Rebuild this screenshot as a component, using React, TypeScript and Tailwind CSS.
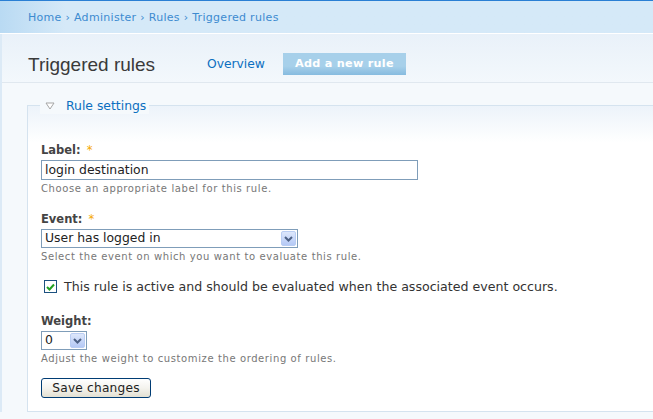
import React from 'react';

const font = "font-['DejaVu_Sans',Verdana,sans-serif]";

const Chevron: React.FC = () => (
  <svg width="9" height="6" viewBox="0 0 9 6">
    <path d="M1 1 L4.5 4.5 L8 1" stroke="#4d6185" strokeWidth="2" fill="none" />
  </svg>
);

const Select: React.FC<{ value: string; width: string }> = ({ value, width }) => (
  <div className={`${width} h-[19px] flex items-center justify-between border border-[#7f9db9] bg-white pl-[3px] pr-[1px]`}>
    <span className="text-[12.4px] leading-none text-[#222]">{value}</span>
    <span className="w-[15px] h-[15px] flex items-center justify-center rounded-[2px] border border-[#b9cdf3] bg-gradient-to-b from-[#dde7fb] to-[#b5c9f5]">
      <Chevron />
    </span>
  </div>
);

const Required: React.FC = () => <span className="ml-[6px] text-[#f5a800] font-normal">*</span>;

const Help: React.FC<{ children: React.ReactNode }> = ({ children }) => (
  <div className="mt-[3px] text-[10px] text-[#777] leading-[12px] tracking-[0.6px]">{children}</div>
);

const App: React.FC = () => {
  return (
    <div className={`${font} w-[653px] h-[419px] overflow-hidden bg-[#f5f9fc] text-[#333]`}>
      {/* breadcrumb */}
      <div className="h-[34px] border-t border-[#2a7fd4] border-b border-b-white bg-gradient-to-r from-[#b9daf3] to-[#d5e9f8] to-[10%] pl-[28px] pt-[2px] flex items-center">
        <span className="text-[11px] text-[#3d8bd0] tracking-[0.3px]">Home › Administer › Rules › Triggered rules</span>
      </div>

      <div className="border-l-2 border-[#dceaf6]">
        {/* title bar */}
        <div className="h-[49px] border-b border-[#e0e8ef] bg-gradient-to-b from-[#e9f1f9] to-[#f3f8fc] pl-[26px] flex items-end pb-[7px]">
          <h1 className="font-['Liberation_Sans',Arial,sans-serif] text-[19px] leading-none text-[#3a3a3a] w-[179px] pb-[1px]">
            Triggered rules
          </h1>
          <a className="text-[12.3px] text-[#0b6fc0] mb-[2px]">Overview</a>
          <span className="ml-[18px] h-[22px] w-[123px] flex items-center justify-center bg-gradient-to-b from-[#a7d0ea] from-60% to-[#86bbdf] text-white font-bold text-[11.2px] tracking-[0.3px]">
            Add a new rule
          </span>
        </div>

        {/* content */}
        <div className="pl-[25px] pt-[22px]">
          <div className="relative border border-[#d5e3ef] border-r-0 h-[307px] bg-gradient-to-b from-[#ecf3fa] via-white via-[12%] to-white">
            <div className="absolute -top-[9px] left-[12px] flex items-center bg-[#f5f9fc] px-[3px]">
              <svg width="10" height="8" viewBox="0 0 10 8" className="mr-[11px] ml-[2px]">
                <path d="M1 1 H9 L5 7 Z" fill="white" stroke="#a5a5a5" strokeWidth="1" />
              </svg>
              <span className="text-[12.4px] leading-[17px] text-[#0b6fc0]">Rule settings</span>
            </div>

            <div className="pl-[13px] pt-[37px]">
              {/* Label */}
              <div className="text-[11.5px] font-bold text-[#444] leading-[14px]">
                Label:<Required />
              </div>
              <div className="mt-[3px] w-[377px] h-[20px] border border-[#7f9db9] bg-white flex items-center pl-[3px]">
                <span className="text-[12.4px] text-[#222] leading-none">login destination</span>
              </div>
              <Help>Choose an appropriate label for this rule.</Help>

              {/* Event */}
              <div className="mt-[17px] text-[11.5px] font-bold text-[#444] leading-[14px]">
                Event:<Required />
              </div>
              <div className="mt-[3px]">
                <Select value="User has logged in" width="w-[257px]" />
              </div>
              <Help>Select the event on which you want to evaluate this rule.</Help>

              {/* checkbox */}
              <div className="mt-[16px] flex items-center">
                <span className="ml-[3px] w-[13px] h-[13px] border border-[#1c5180] bg-white flex items-center justify-center">
                  <svg width="9" height="8" viewBox="0 0 9 8">
                    <path d="M1 4 L3.5 6.5 L8 1.5" stroke="#21a121" strokeWidth="2" fill="none" />
                  </svg>
                </span>
                <span className="ml-[7px] text-[12.6px] text-[#333] leading-[15px]">
                  This rule is active and should be evaluated when the associated event occurs.
                </span>
              </div>

              {/* Weight */}
              <div className="mt-[20px] text-[11.5px] font-bold text-[#444] leading-[14px]">Weight:</div>
              <div className="mt-[3px]">
                <Select value="0" width="w-[46px]" />
              </div>
              <Help>Adjust the weight to customize the ordering of rules.</Help>

              <button className="mt-[13px] block w-[110px] h-[20px] rounded-[3px] border border-[#003c74] bg-gradient-to-b from-white via-[#f4f3ee] to-[#e3e0d2] text-[12.2px] leading-none text-[#222] tracking-[0.2px]">
                Save changes
              </button>
            </div>
          </div>
        </div>
      </div>
    </div>
  );
};

export default App;
